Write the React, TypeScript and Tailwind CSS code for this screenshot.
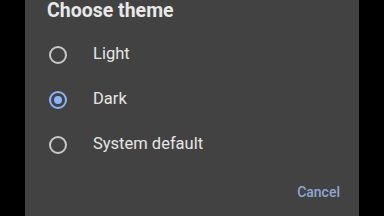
const options = [
  { label: 'Light', checked: false },
  { label: 'Dark', checked: true },
  { label: 'System default', checked: false },
]

function Radio({ checked }: { checked: boolean }) {
  return (
    <span
      className={`flex h-[18px] w-[18px] items-center justify-center rounded-full border-2 ${
        checked ? 'border-[#8ab4f8]' : 'border-[#c8c8c8]'
      }`}
    >
      {checked && <span className="h-2 w-2 rounded-full bg-[#8ab4f8]" />}
    </span>
  )
}

export default function App() {
  return (
    <div className="flex h-[216px] w-[384px] overflow-hidden bg-black" style={{ fontFamily: 'Roboto, "Noto Sans", sans-serif' }}>
      <div className="ml-[25px] flex h-full w-[334px] flex-col bg-[#424242]">
        <h2 className="mt-[-1px] pl-[22px] text-[19.5px] font-bold leading-[24px] text-[#e8e8e8]">Choose theme</h2>
        <div className="mt-[9px] flex flex-col">
          {options.map(o => (
            <div key={o.label} className="flex h-[45px] items-center pl-[24px]">
              <Radio checked={o.checked} />
              <span className="ml-[26px] text-[16.5px] text-[#e6e6e6]">{o.label}</span>
            </div>
          ))}
        </div>
        <div className="mt-[15px] flex justify-end pr-[19px]">
          <span className="text-[14px] font-medium text-[#8fa7d4]">Cancel</span>
        </div>
      </div>
    </div>
  )
}
